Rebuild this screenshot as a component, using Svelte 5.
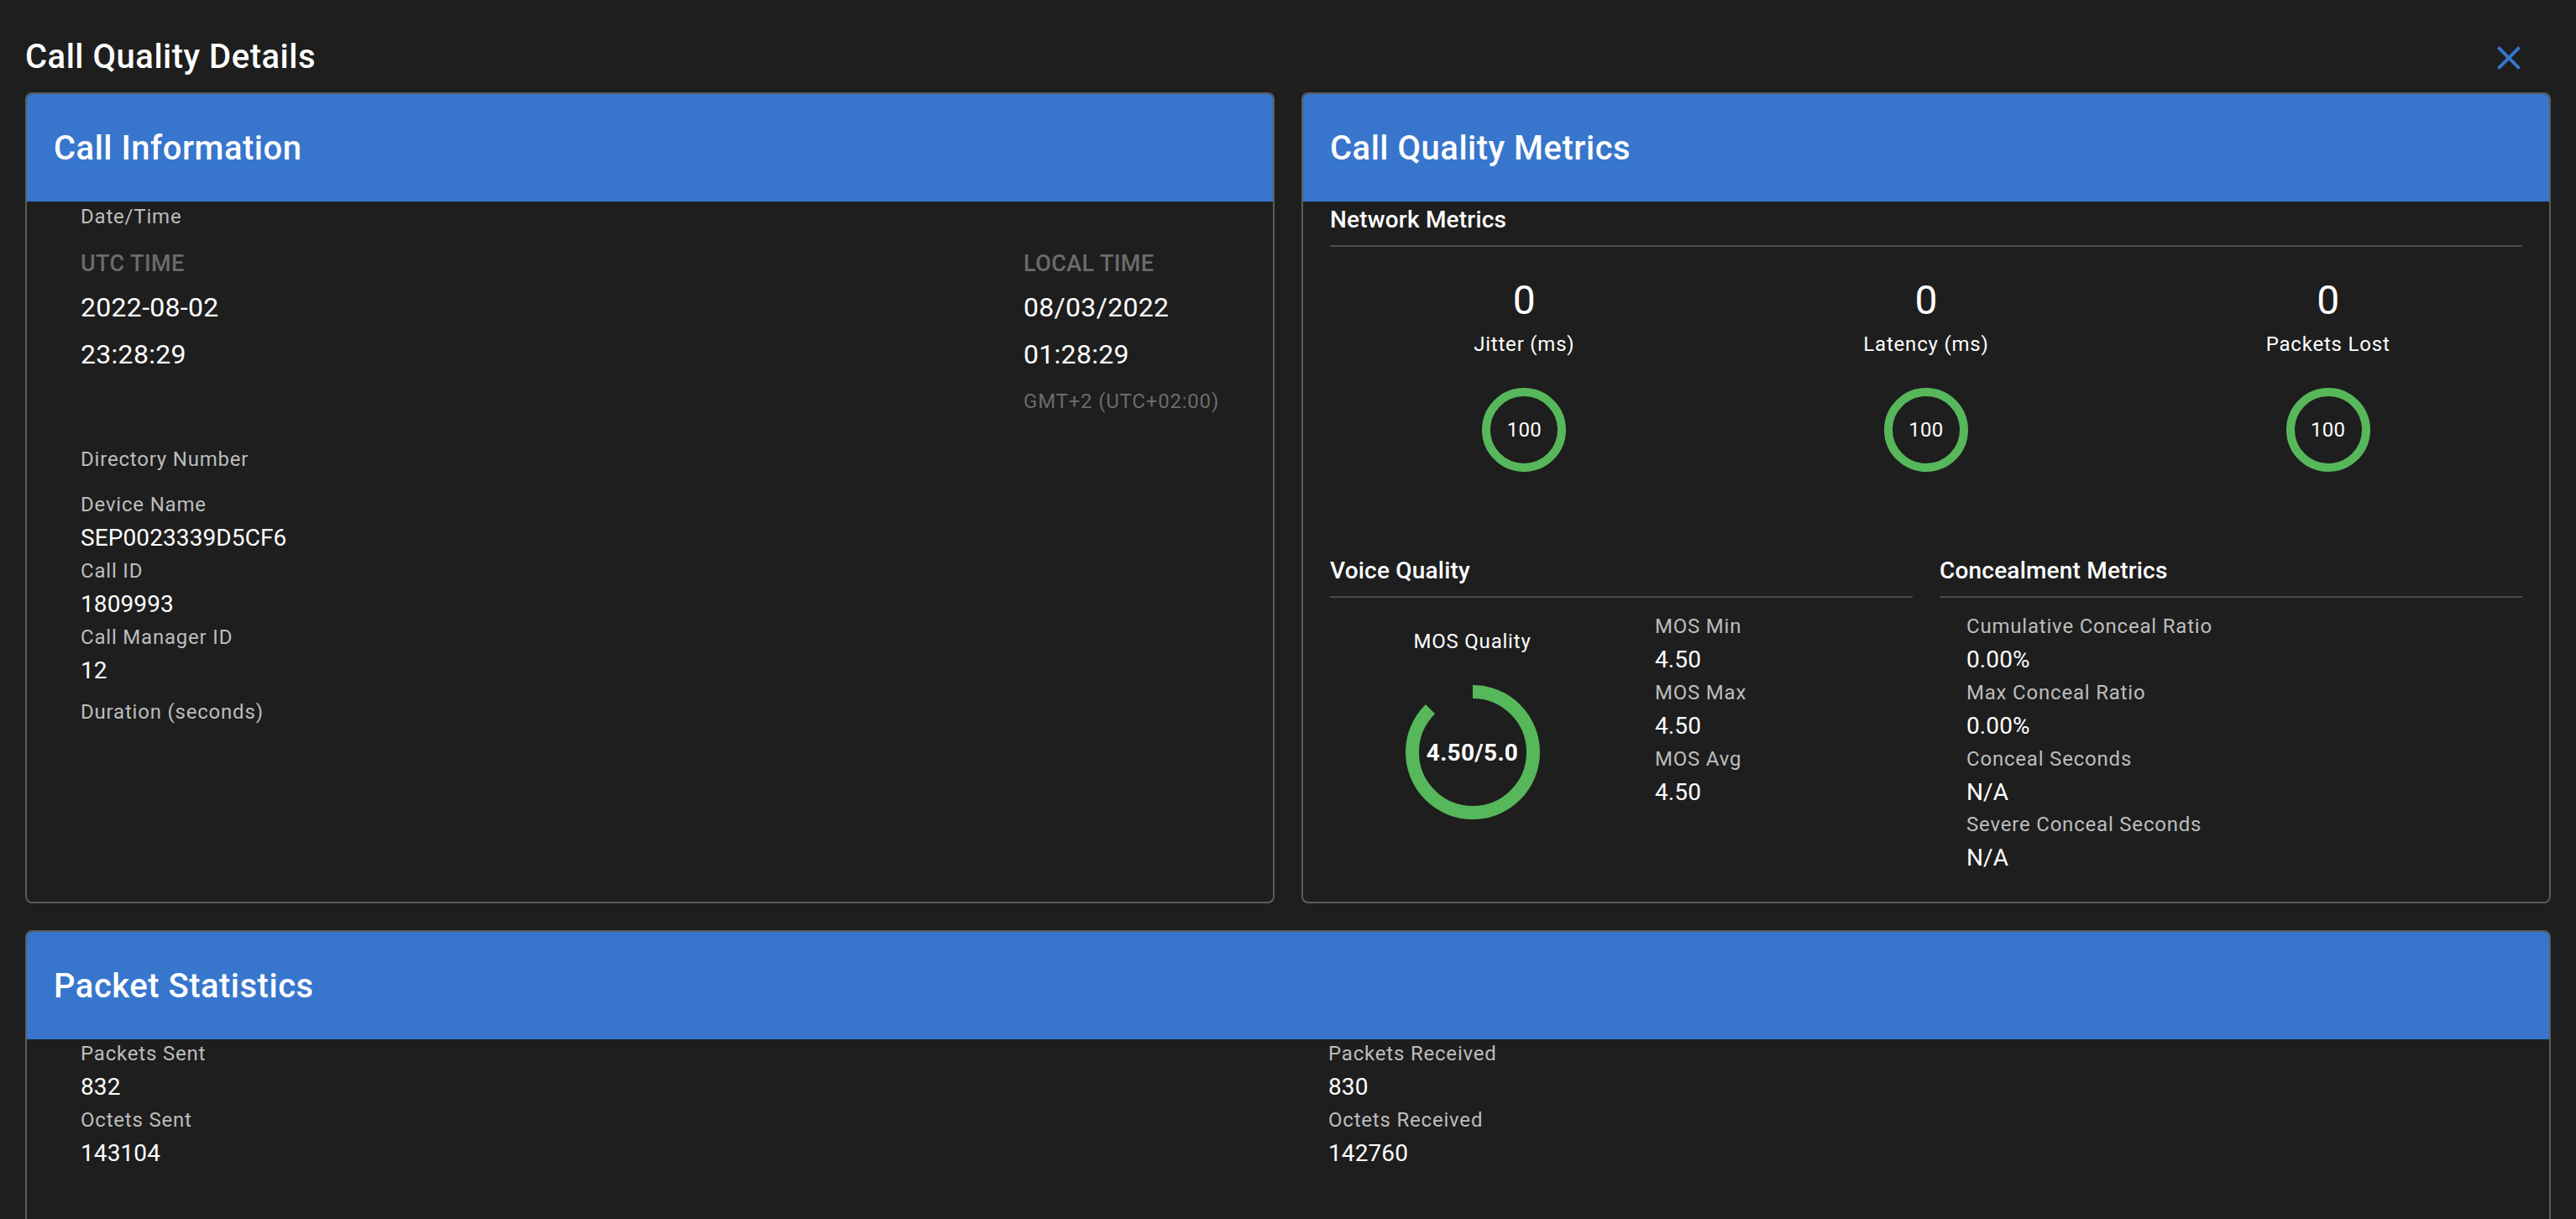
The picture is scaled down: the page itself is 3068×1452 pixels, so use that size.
<script lang="ts">
	const network = [
		{ value: '0', label: 'Jitter (ms)', score: 100 },
		{ value: '0', label: 'Latency (ms)', score: 100 },
		{ value: '0', label: 'Packets Lost', score: 100 }
	];

	const mosStats = [
		{ label: 'MOS Min', value: '4.50' },
		{ label: 'MOS Max', value: '4.50' },
		{ label: 'MOS Avg', value: '4.50' }
	];

	const concealment = [
		{ label: 'Cumulative Conceal Ratio', value: '0.00%' },
		{ label: 'Max Conceal Ratio', value: '0.00%' },
		{ label: 'Conceal Seconds', value: 'N/A' },
		{ label: 'Severe Conceal Seconds', value: 'N/A' }
	];

	const callFields = [
		{ label: 'Device Name', value: 'SEP0023339D5CF6' },
		{ label: 'Call ID', value: '1809993' },
		{ label: 'Call Manager ID', value: '12' }
	];

	const packetColumns = [
		[
			{ label: 'Packets Sent', value: '832' },
			{ label: 'Octets Sent', value: '143104' }
		],
		[
			{ label: 'Packets Received', value: '830' },
			{ label: 'Octets Received', value: '142760' }
		]
	];

	// the MOS gauge runs over the 1-5 scale, so 4.5 fills 87.5%
	const mosRadius = 72;
	const mosLength = 2 * Math.PI * mosRadius;
	const mosFill = ((4.5 - 1) / 4) * mosLength;
</script>

{#snippet field(label: string, value: string)}
	<div class="field">
		<div class="label">{label}</div>
		<div class="value">{value}</div>
	</div>
{/snippet}

<div class="page">
	<header class="title-bar">
		<h2>Call Quality Details</h2>
		<button type="button" class="close" aria-label="Close">
			<svg viewBox="0 0 24 24" width="48" height="48" fill="currentColor">
				<path d="M19 6.41 17.59 5 12 10.59 6.41 5 5 6.41 10.59 12 5 17.59 6.41 19 12 13.41 17.59 19 19 17.59 13.41 12z" />
			</svg>
		</button>
	</header>

	<div class="top-grid">
		<section class="panel">
			<h3 class="panel-title">Call Information</h3>
			<div class="call-body">
				<div class="label date-label">Date/Time</div>
				<div class="times">
					<div>
						<div class="time-head">UTC TIME</div>
						<div class="time-value">2022-08-02</div>
						<div class="time-value">23:28:29</div>
					</div>
					<div>
						<div class="time-head">LOCAL TIME</div>
						<div class="time-value">08/03/2022</div>
						<div class="time-value">01:28:29</div>
						<div class="zone">GMT+2 (UTC+02:00)</div>
					</div>
				</div>
				<div class="label directory">Directory Number</div>
				{#each callFields as item}
					{@render field(item.label, item.value)}
				{/each}
				<div class="label duration">Duration (seconds)</div>
			</div>
		</section>

		<section class="panel">
			<h3 class="panel-title">Call Quality Metrics</h3>
			<div class="metrics-body">
				<h4 class="section-title">Network Metrics</h4>
				<div class="network">
					{#each network as metric}
						<div class="metric">
							<div class="metric-value">{metric.value}</div>
							<div class="metric-label">{metric.label}</div>
							<div class="score">{metric.score}</div>
						</div>
					{/each}
				</div>

				<div class="lower">
					<div>
						<h4 class="section-title">Voice Quality</h4>
						<div class="voice">
							<div class="mos">
								<div class="metric-label">MOS Quality</div>
								<div class="gauge">
									<svg viewBox="0 0 160 160" width="160" height="160">
										<circle
											cx="80"
											cy="80"
											r={mosRadius}
											fill="none"
											stroke="#57b75b"
											stroke-width="16"
											stroke-dasharray="{mosFill} {mosLength}"
											transform="rotate(-90 80 80)"
										/>
									</svg>
									<span>4.50/5.0</span>
								</div>
							</div>
							<div class="mos-stats">
								{#each mosStats as item}
									{@render field(item.label, item.value)}
								{/each}
							</div>
						</div>
					</div>
					<div>
						<h4 class="section-title">Concealment Metrics</h4>
						<div class="conceal">
							{#each concealment as item}
								{@render field(item.label, item.value)}
							{/each}
						</div>
					</div>
				</div>
			</div>
		</section>
	</div>

	<section class="panel packets">
		<h3 class="panel-title">Packet Statistics</h3>
		<div class="packet-grid">
			{#each packetColumns as column}
				<div>
					{#each column as item}
						{@render field(item.label, item.value)}
					{/each}
				</div>
			{/each}
		</div>
	</section>
</div>

<style>
	:global(body) {
		margin: 0;
		background: #1e1e1e;
		overflow: hidden;
	}

	.page {
		height: 1452px;
		overflow: hidden;
		padding: 0 30px;
		box-sizing: border-box;
		background: #1e1e1e;
		color: #fff;
		font-family: Roboto, 'Liberation Sans', sans-serif;
	}

	.title-bar {
		display: flex;
		align-items: center;
		justify-content: space-between;
		height: 110px;
		padding-top: 28px;
		box-sizing: border-box;
	}

	.title-bar h2 {
		margin: 0;
		padding-bottom: 4px;
		font-size: 40px;
		font-weight: 500;
		letter-spacing: 0.5px;
	}

	.close {
		display: flex;
		margin-right: 10px;
		padding: 16px;
		border: 0;
		background: none;
		color: #3776cc;
	}

	.top-grid {
		display: grid;
		grid-template-columns: 1fr 1fr;
		gap: 32px;
	}

	.panel {
		min-height: 966px;
		box-sizing: border-box;
		border: 2px solid #5c5c5c;
		border-radius: 8px;
		overflow: hidden;
	}

	.packets {
		margin-top: 32px;
		min-height: 400px;
	}

	.panel-title {
		display: flex;
		align-items: center;
		height: 128px;
		margin: 0;
		padding: 0 32px;
		background: #3776cc;
		font-size: 40px;
		font-weight: 500;
		letter-spacing: 0.5px;
	}

	.label {
		padding-bottom: 2px;
		color: #bdbdbd;
		font-size: 24px;
		line-height: 38px;
		letter-spacing: 0.8px;
	}

	.value {
		font-size: 28px;
		line-height: 38.8px;
		letter-spacing: 0.1px;
	}

	.field {
		padding-left: 32px;
	}

	.call-body {
		padding: 0 32px;
	}

	.call-body > .label {
		padding-left: 32px;
	}

	.call-body > .date-label {
		line-height: 36px;
	}

	.times {
		display: flex;
		justify-content: space-between;
		padding: 16px 27px 0 32px;
	}

	.times > div {
		min-width: 238px;
	}

	.time-head {
		color: #6b6b6b;
		font-size: 27px;
		font-weight: 500;
		line-height: 40px;
		letter-spacing: 0.4px;
	}

	.time-value {
		margin-top: 8px;
		font-size: 32px;
		line-height: 48px;
		letter-spacing: 0.3px;
	}

	.zone {
		margin-top: 12px;
		color: #6b6b6b;
		font-size: 24px;
		line-height: 40px;
		letter-spacing: 0.8px;
	}

	.call-body > .directory {
		margin-top: 30px;
		margin-bottom: 14px;
	}

	.call-body > .duration {
		margin-top: 11px;
	}

	.metrics-body {
		padding: 0 32px;
	}

	.section-title {
		margin: 0;
		padding: 2px 0 10px;
		border-bottom: 2px solid #4a4a4a;
		font-size: 28px;
		font-weight: 500;
		line-height: 40px;
		letter-spacing: 0.2px;
	}

	.network {
		display: grid;
		grid-template-columns: repeat(3, 1fr);
		margin: 32px -8px 0;
	}

	.metric {
		display: flex;
		flex-direction: column;
		align-items: center;
	}

	.metric-value {
		font-size: 48px;
		line-height: 64px;
	}

	.metric-label {
		font-size: 24px;
		line-height: 40px;
		letter-spacing: 0.8px;
	}

	.score {
		display: flex;
		align-items: center;
		justify-content: center;
		width: 100px;
		height: 100px;
		margin-top: 32px;
		box-sizing: border-box;
		border: 10px solid #57b75b;
		border-radius: 50%;
		font-size: 24px;
		letter-spacing: 0.3px;
	}

	.lower {
		display: grid;
		grid-template-columns: 1fr 1fr;
		gap: 32px;
		margin-top: 96px;
	}

	.voice {
		display: grid;
		grid-template-columns: 1fr 1fr;
		margin: 0 -8px;
	}

	.mos {
		display: flex;
		flex-direction: column;
		align-items: center;
		padding-top: 32px;
	}

	.gauge {
		position: relative;
		display: flex;
		width: 160px;
		height: 160px;
		margin-top: 32px;
	}

	.gauge span {
		position: absolute;
		inset: 0;
		display: flex;
		align-items: center;
		justify-content: center;
		font-size: 28px;
		font-weight: 700;
		letter-spacing: 0.3px;
	}

	.mos-stats {
		padding: 15px 0 0 8px;
	}

	.conceal {
		padding-top: 15px;
	}

	.packet-grid {
		display: grid;
		grid-template-columns: 1fr 1fr;
		margin-top: -2px;
		padding-left: 32px;
	}
</style>
